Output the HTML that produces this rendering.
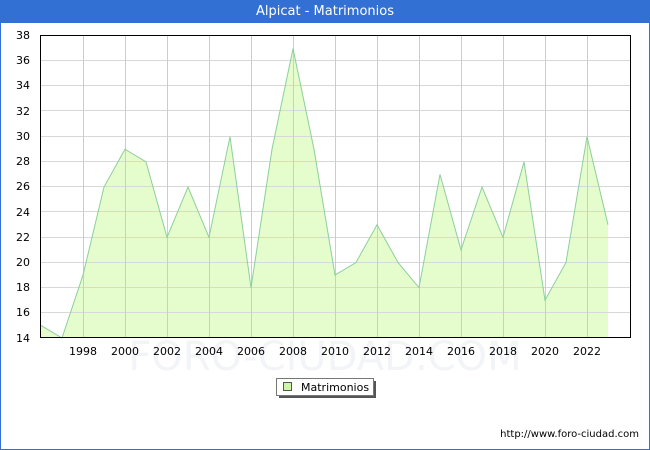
<!DOCTYPE html>
<html><head><meta charset="utf-8"><style>
html,body{margin:0;padding:0;background:#fff;}
body{width:650px;height:450px;position:relative;overflow:hidden;font-family:"DejaVu Sans","Liberation Sans",sans-serif;}
.frame{position:absolute;left:0;top:0;width:648px;height:448px;border:1px solid #3370d4;}
.title{position:absolute;left:0;top:0;width:650px;height:23px;background:#3370d4;color:#fff;font-size:13px;text-align:center;line-height:23px;}
</style></head><body>
<div class="frame"></div>
<div class="title">Alpicat - Matrimonios</div>
<svg width="650" height="450" style="position:absolute;left:0;top:0" font-family="DejaVu Sans, Liberation Sans, sans-serif" font-size="11">
<text x="325" y="370" text-anchor="middle" font-size="40" fill="#f2f4f8">FORO-CIUDAD.COM</text>
<g transform="translate(41,338) scale(21,-12.583)">
<polygon points="0,1 1,0 2,5 3,12 4,15 5,14 6,8 7,12 8,8 9,16 10,4 11,15 12,23 13,15 14,5 15,6 16,9 17,6 18,4 19,13 20,7 21,12 22,8 23,14 24,3 25,6 26,16 27,9 27,0 0,0" fill="#e5fdcc" stroke="none"/>
</g>
<g stroke="#d8d8d8" stroke-width="1">
<line x1="41" x2="630" y1="60.5" y2="60.5"/><line x1="41" x2="630" y1="85.5" y2="85.5"/><line x1="41" x2="630" y1="110.5" y2="110.5"/><line x1="41" x2="630" y1="136.5" y2="136.5"/><line x1="41" x2="630" y1="161.5" y2="161.5"/><line x1="41" x2="630" y1="186.5" y2="186.5"/><line x1="41" x2="630" y1="211.5" y2="211.5"/><line x1="41" x2="630" y1="237.5" y2="237.5"/><line x1="41" x2="630" y1="262.5" y2="262.5"/><line x1="41" x2="630" y1="287.5" y2="287.5"/><line x1="41" x2="630" y1="312.5" y2="312.5"/>
</g>
<g stroke="#cccccc" stroke-width="1">
<line x1="83.5" x2="83.5" y1="35" y2="338"/><line x1="125.5" x2="125.5" y1="35" y2="338"/><line x1="167.5" x2="167.5" y1="35" y2="338"/><line x1="209.5" x2="209.5" y1="35" y2="338"/><line x1="251.5" x2="251.5" y1="35" y2="338"/><line x1="293.5" x2="293.5" y1="35" y2="338"/><line x1="335.5" x2="335.5" y1="35" y2="338"/><line x1="377.5" x2="377.5" y1="35" y2="338"/><line x1="419.5" x2="419.5" y1="35" y2="338"/><line x1="461.5" x2="461.5" y1="35" y2="338"/><line x1="503.5" x2="503.5" y1="35" y2="338"/><line x1="545.5" x2="545.5" y1="35" y2="338"/><line x1="587.5" x2="587.5" y1="35" y2="338"/>
</g>
<g transform="translate(41,338) scale(21,-12.583)">
<polyline points="0,1 1,0 2,5 3,12 4,15 5,14 6,8 7,12 8,8 9,16 10,4 11,15 12,23 13,15 14,5 15,6 16,9 17,6 18,4 19,13 20,7 21,12 22,8 23,14 24,3 25,6 26,16 27,9" fill="none" stroke="#8ccf9c" stroke-width="1" vector-effect="non-scaling-stroke"/>
</g>
<rect x="40.5" y="35.5" width="590" height="302" fill="none" stroke="#000" stroke-width="1"/>
<g text-anchor="end" fill="#000">
<text x="30" y="39">38</text><text x="30" y="64">36</text><text x="30" y="89">34</text><text x="30" y="115">32</text><text x="30" y="140">30</text><text x="30" y="165">28</text><text x="30" y="190">26</text><text x="30" y="216">24</text><text x="30" y="241">22</text><text x="30" y="266">20</text><text x="30" y="291">18</text><text x="30" y="316">16</text><text x="30" y="342">14</text>
</g>
<g text-anchor="middle" fill="#000">
<text x="83" y="355">1998</text><text x="125" y="355">2000</text><text x="167" y="355">2002</text><text x="209" y="355">2004</text><text x="251" y="355">2006</text><text x="293" y="355">2008</text><text x="335" y="355">2010</text><text x="377" y="355">2012</text><text x="419" y="355">2014</text><text x="461" y="355">2016</text><text x="503" y="355">2018</text><text x="545" y="355">2020</text><text x="587" y="355">2022</text>
</g>
<rect x="279" y="381" width="97" height="17" fill="#555"/>
<rect x="276.5" y="378.5" width="97" height="17" fill="#fff" stroke="#777"/>
<rect x="283.5" y="382.5" width="8" height="8" fill="#ccf5a8" stroke="#555"/>
<text x="301" y="391" fill="#000">Matrimonios</text>
<text x="639" y="437" text-anchor="end" font-size="10" fill="#000">http://www.foro-ciudad.com</text>
</svg>
</body></html>
